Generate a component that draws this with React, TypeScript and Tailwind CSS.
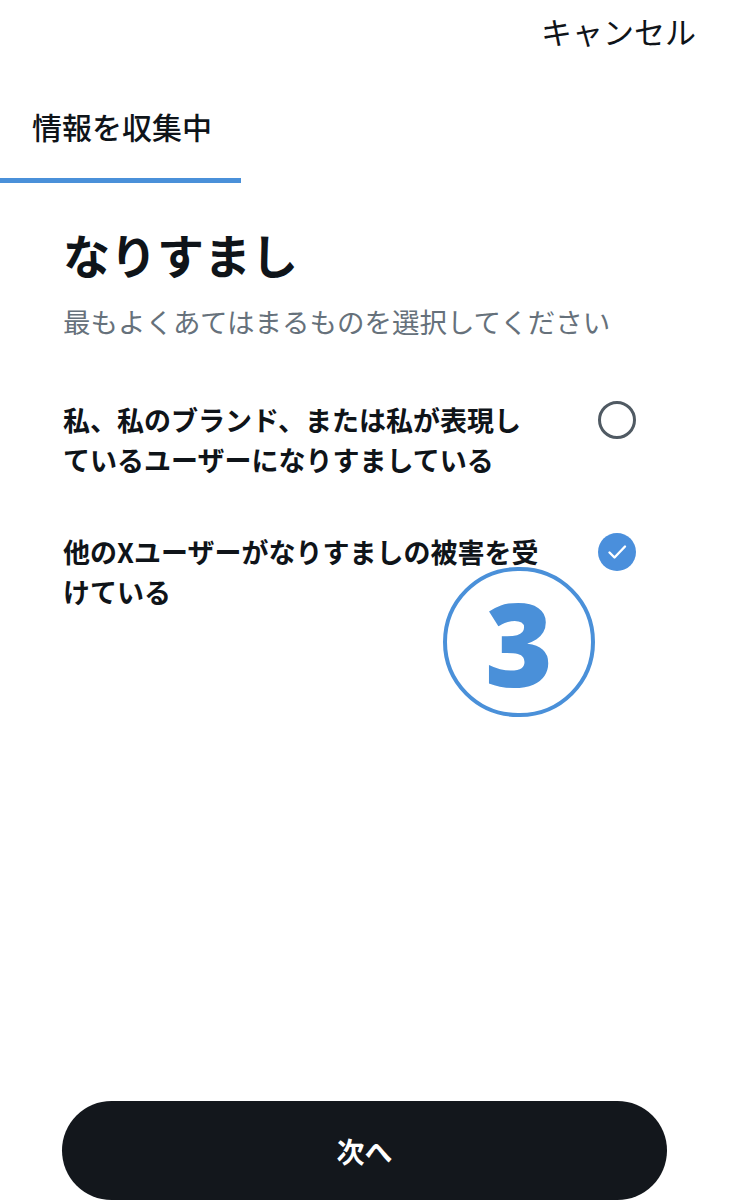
import React from "react";

const FONT = { fontFamily: '"Noto Sans CJK JP", "Noto Sans", sans-serif' };

export default function App() {
  return (
    <div
      className="relative flex h-[1200px] w-[730px] flex-col overflow-hidden bg-white text-[#0f1419]"
      style={FONT}
    >
      {/* header */}
      <div className="flex h-[62px] items-center justify-end pr-[34px]">
        <span className="text-[31px] leading-[40px]">キャンセル</span>
      </div>

      {/* tab */}
      <div className="w-[241px]">
        <div className="pl-[32px] pt-[44px] pb-[32px] text-[30px] font-medium leading-[40px]">
          情報を収集中
        </div>
        <div className="h-[5px] bg-[#4a90d9]" />
      </div>

      {/* content */}
      <div className="flex flex-col px-[63px]">
        <h1 className="mt-[43px] text-[47px] font-bold leading-[56px]">なりすまし</h1>
        <p className="mt-[21px] text-[27.5px] leading-[36px] text-[#66717b]">
          最もよくあてはまるものを選択してください
        </p>

        <div className="mt-[61px] flex items-start justify-between">
          <div className="text-[27px] font-bold leading-[40px]">
            私、私のブランド、または私が表現し
            <br />
            ているユーザーになりすましている
          </div>
          <div className="mt-[1px] mr-[31px] h-[38px] w-[38px] shrink-0 rounded-full border-[3px] border-[#505a63]" />
        </div>

        <div className="mt-[52px] flex items-start justify-between">
          <div className="text-[27px] font-bold leading-[40px]">
            他のXユーザーがなりすましの被害を受
            <br />
            けている
          </div>
          <div className="mt-[1px] mr-[31px] flex h-[38px] w-[38px] shrink-0 items-center justify-center rounded-full bg-[#4a8fdc]">
            <svg width="38" height="38" viewBox="0 0 38 38" fill="none">
              <path
                d="M11.5 19.5 L16.5 24.5 L27 13.5"
                stroke="white"
                strokeWidth="2.4"
                strokeLinecap="round"
                strokeLinejoin="round"
              />
            </svg>
          </div>
        </div>
      </div>

      {/* button */}
      <div className="mt-auto flex justify-center pr-[1px]">
        <button className="flex h-[99px] w-[605px] items-center justify-center rounded-full bg-[#13171c] text-[28px] font-bold text-white">
          次へ
        </button>
      </div>

      {/* annotation ③ */}
      <div className="absolute left-[443px] top-[567px] flex h-[150px] w-[152px] items-center justify-center rounded-full border-[4px] border-[#4a90d9]">
        <span
          className="text-[116px] font-extrabold leading-none text-[#4a90d9]"
          style={{ fontFamily: '"Open Sans", sans-serif' }}
        >
          3
        </span>
      </div>
    </div>
  );
}
